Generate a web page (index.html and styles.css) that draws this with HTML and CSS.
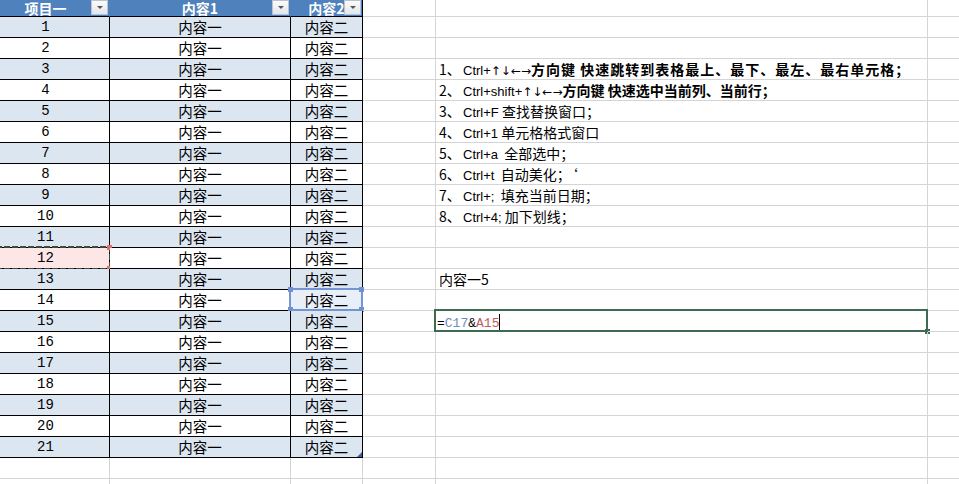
FILE: index.html
```html
<!DOCTYPE html>
<html lang="zh-CN">
<head>
<meta charset="utf-8">
<title>Sheet</title>
<link rel="stylesheet" href="styles.css">
</head>
<body>
<div class="sheet">
  <div class="c h"><span class="ht">项目一</span><span class="dd"></span></div>
  <div class="c h"><span class="ht">内容1</span><span class="dd"></span></div>
  <div class="c h hl"><span class="ht">内容2</span><span class="dd"></span></div>
  <div class="c g"></div><div class="c g"></div><div class="c g gl"></div>

  <div class="c t b num">1</div><div class="c t b">内容一</div><div class="c t b tl">内容二</div>
  <div class="c g"></div><div class="c g"></div><div class="c g gl"></div>

  <div class="c t num">2</div><div class="c t">内容一</div><div class="c t tl">内容二</div>
  <div class="c g"></div><div class="c g"></div><div class="c g gl"></div>

  <div class="c t b num">3</div><div class="c t b">内容一</div><div class="c t b tl">内容二</div>
  <div class="c g"></div><div class="c g tx"><span class="no">1、</span><span class="lat">Ctrl+</span><span class="arr">↑↓←→</span><b class="wide">方向键 快速跳转到表格最上、最下、最左、最右单元格；</b></div><div class="c g gl"></div>

  <div class="c t num">4</div><div class="c t">内容一</div><div class="c t tl">内容二</div>
  <div class="c g"></div><div class="c g tx"><span class="no">2、</span><span class="lat">Ctrl+shift+</span><span class="arr">↑↓←→</span><b>方向键 快速选中当前列、当前行；</b></div><div class="c g gl"></div>

  <div class="c t b num">5</div><div class="c t b">内容一</div><div class="c t b tl">内容二</div>
  <div class="c g"></div><div class="c g tx"><span class="no">3、</span><span class="lat">Ctrl+F</span> 查找替换窗口；</div><div class="c g gl"></div>

  <div class="c t num">6</div><div class="c t">内容一</div><div class="c t tl">内容二</div>
  <div class="c g"></div><div class="c g tx"><span class="no">4、</span><span class="lat">Ctrl+1</span> 单元格格式窗口</div><div class="c g gl"></div>

  <div class="c t b num">7</div><div class="c t b">内容一</div><div class="c t b tl">内容二</div>
  <div class="c g"></div><div class="c g tx"><span class="no">5、</span><span class="lat">Ctrl+a</span>&nbsp; 全部选中；</div><div class="c g gl"></div>

  <div class="c t num">8</div><div class="c t">内容一</div><div class="c t tl">内容二</div>
  <div class="c g"></div><div class="c g tx"><span class="no">6、</span><span class="lat">Ctrl+t</span>&nbsp; 自动美化；‘</div><div class="c g gl"></div>

  <div class="c t b num">9</div><div class="c t b">内容一</div><div class="c t b tl">内容二</div>
  <div class="c g"></div><div class="c g tx"><span class="no">7、</span><span class="lat">Ctrl+;</span>&nbsp; 填充当前日期；</div><div class="c g gl"></div>

  <div class="c t num">10</div><div class="c t">内容一</div><div class="c t tl">内容二</div>
  <div class="c g"></div><div class="c g tx"><span class="no">8、</span><span class="lat">Ctrl+4;</span> 加下划线；</div><div class="c g gl"></div>

  <div class="c t b num">11</div><div class="c t b">内容一</div><div class="c t b tl">内容二</div>
  <div class="c g"></div><div class="c g"></div><div class="c g gl"></div>

  <div class="c t num copy">12<span class="hd hd-tr"></span><span class="hd hd-br"></span></div><div class="c t">内容一</div><div class="c t tl">内容二</div>
  <div class="c g"></div><div class="c g"></div><div class="c g gl"></div>

  <div class="c t b num">13</div><div class="c t b">内容一</div><div class="c t b tl">内容二</div>
  <div class="c g"></div><div class="c g tx">内容一5</div><div class="c g gl"></div>

  <div class="c t num">14</div><div class="c t">内容一</div><div class="c t tl sel">内容二<span class="sq sq-tl"></span><span class="sq sq-tr"></span><span class="sq sq-bl"></span><span class="sq sq-br"></span></div>
  <div class="c g"></div><div class="c g"></div><div class="c g gl"></div>

  <div class="c t b num">15</div><div class="c t b">内容一</div><div class="c t b tl">内容二</div>
  <div class="c g"></div><div class="c g tx edit"><span class="fm">=<span class="rc">C17</span>&amp;<span class="ra">A15</span></span><span class="caret"></span><span class="fh"></span></div><div class="c g gl"></div>

  <div class="c t num">16</div><div class="c t">内容一</div><div class="c t tl">内容二</div>
  <div class="c g"></div><div class="c g"></div><div class="c g gl"></div>

  <div class="c t b num">17</div><div class="c t b">内容一</div><div class="c t b tl">内容二</div>
  <div class="c g"></div><div class="c g"></div><div class="c g gl"></div>

  <div class="c t num">18</div><div class="c t">内容一</div><div class="c t tl">内容二</div>
  <div class="c g"></div><div class="c g"></div><div class="c g gl"></div>

  <div class="c t b num">19</div><div class="c t b">内容一</div><div class="c t b tl">内容二</div>
  <div class="c g"></div><div class="c g"></div><div class="c g gl"></div>

  <div class="c t num">20</div><div class="c t">内容一</div><div class="c t tl">内容二</div>
  <div class="c g"></div><div class="c g"></div><div class="c g gl"></div>

  <div class="c t b num">21</div><div class="c t b">内容一</div><div class="c t b tl last">内容二<span class="rz"></span></div>
  <div class="c g"></div><div class="c g"></div><div class="c g gl"></div>

  <div class="c g"></div><div class="c g"></div><div class="c g"></div>
  <div class="c g"></div><div class="c g"></div><div class="c g gl"></div>

  <div class="c g"></div><div class="c g"></div><div class="c g"></div>
  <div class="c g"></div><div class="c g"></div><div class="c g gl"></div>
</div>
</body>
</html>
```

FILE: styles.css
```css
html, body {
  margin: 0;
  padding: 0;
  background: #ffffff;
  overflow: hidden;
}
body {
  width: 959px;
  height: 484px;
  font-family: "Noto Sans CJK SC", "Liberation Sans", sans-serif;
  color: #000;
}
.sheet {
  display: grid;
  margin-left: -18px;
  grid-template-columns: 128px 181px 72px 73px 492px 31px;
  grid-template-rows: 17px;
  grid-auto-rows: 21px;
}
.c {
  box-sizing: border-box;
  border-right: 1px solid #d4d4d4;
  border-bottom: 1px solid #d4d4d4;
  font-size: 14px;
  line-height: 20px;
  white-space: nowrap;
  position: relative;
}
.gl { border-right: none; }
.h {
  background: #4f81bd;
  border-right: 1px solid #4f81bd;
  border-bottom: 1px solid #000;
  color: #fff;
  font-weight: bold;
  font-size: 14px;
  line-height: 16px;
  text-align: center;
}
.hl { border-right: 1px solid #000; }
.dd {
  position: absolute;
  right: 1px;
  top: 0;
  width: 17px;
  height: 15px;
  box-sizing: border-box;
  border: 1px solid #b7c3d3;
  background: linear-gradient(#fbfbfb, #e3e6ea);
}
.dd::after {
  content: "";
  position: absolute;
  left: 5px;
  top: 5px;
  border-left: 3px solid transparent;
  border-right: 3px solid transparent;
  border-top: 3px solid #555;
}
.t {
  border-right: 1px solid #000;
  border-bottom: 1px solid #000;
  text-align: center;
  font-size: 14.5px;
  background: #fff;
}
.t.b { background: #dce6f1; }
.num {
  font-family: "Liberation Mono", "DejaVu Sans Mono", monospace;
  font-size: 14px;
}
.tx {
  padding-left: 3px;
  font-size: 14px;
  overflow: visible;
}
.tx b { font-weight: bold; }
.tx b.wide { letter-spacing: 1px; }
.no { display: inline-block; width: 24px; }
.lat {
  font-family: "Liberation Sans", "DejaVu Sans", sans-serif;
  font-size: 13px;
}
.arr {
  font-family: "DejaVu Sans", sans-serif;
  font-size: 12px;
}

/* copy marquee on A12 */
.copy { background: #fce6e6; }
.copy::before {
  content: "";
  position: absolute;
  left: -2px;
  right: -2px;
  top: -2px;
  bottom: -2px;
  background:
    repeating-linear-gradient(90deg, #3d4a3a 0 6px, transparent 6px 8px) left top / 100% 2px no-repeat,
    repeating-linear-gradient(90deg, #3d4a3a 0 6px, transparent 6px 8px) left bottom / 100% 2px no-repeat,
    repeating-linear-gradient(180deg, #3d4a3a 0 6px, transparent 6px 8px) right top / 2px 100% no-repeat;
}
.hd {
  position: absolute;
  width: 5px;
  height: 5px;
  background: #e06c6c;
}
.hd-tr { right: -3px; top: -3px; }
.hd-br { right: -3px; bottom: -3px; }

/* blue reference highlight on C14 */
.sel { background: #e9eff9; }
.sel::before {
  content: "";
  position: absolute;
  left: -2px;
  right: -1px;
  top: -2px;
  bottom: -1px;
  border: 2px solid #7495d2;
}
.sq {
  position: absolute;
  width: 5px;
  height: 5px;
  background: #6f91d0;
}
.sq-tl { left: -3px; top: -3px; }
.sq-tr { right: -2px; top: -3px; }
.sq-bl { left: -3px; bottom: -2px; }
.sq-br { right: -2px; bottom: -2px; }

/* editing cell */
.edit::before {
  content: "";
  position: absolute;
  left: -2px;
  right: -1px;
  top: -2px;
  bottom: -1px;
  border: 2px solid #3e6c52;
}
.fm {
  font-family: "Liberation Mono", "DejaVu Sans Mono", monospace;
  font-size: 13px;
  margin-left: -2px;
}
.rc { color: #6c8cc4; }
.ra { color: #c06058; }
.caret {
  display: inline-block;
  width: 1px;
  height: 16px;
  background: #000;
  vertical-align: -3px;
}
.fh {
  position: absolute;
  right: -3px;
  bottom: -3px;
  width: 5px;
  height: 5px;
  background: #3e6c52;
}

/* resize handle of the table */
.rz {
  position: absolute;
  right: 0;
  bottom: 0;
  width: 0;
  height: 0;
  border-left: 5px solid transparent;
  border-bottom: 5px solid #4a5a9c;
}
```
